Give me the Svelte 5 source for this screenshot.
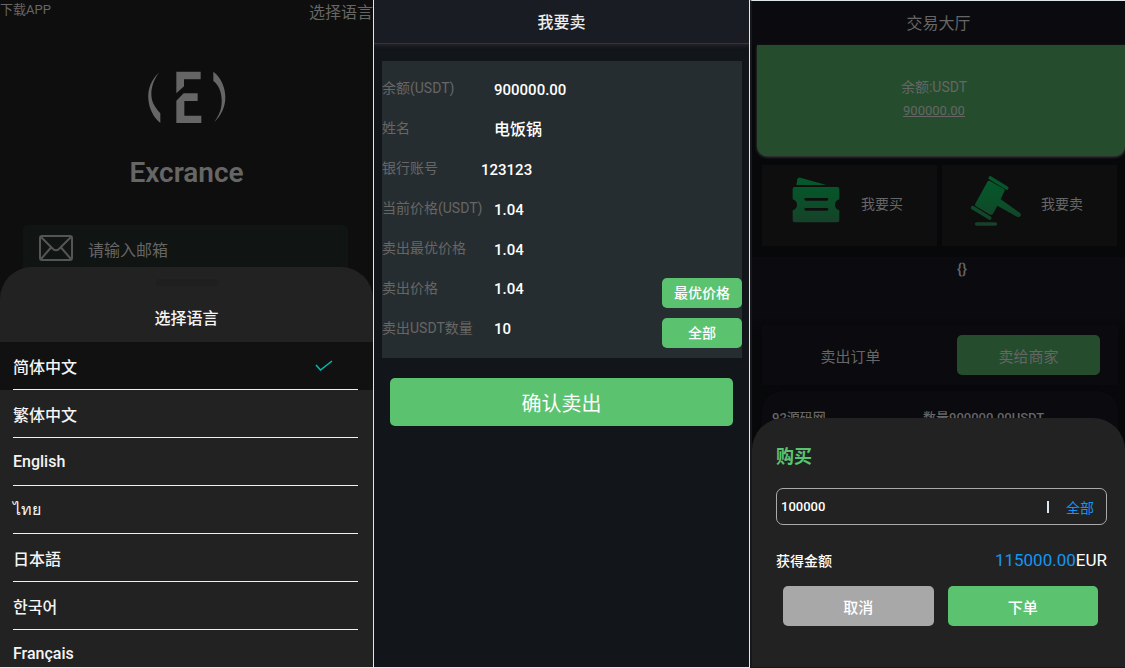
<script>
  const languages = ['简体中文', '繁体中文', 'English', 'ไทย', '日本語', '한국어', 'Français'];
  let selected = $state('简体中文');

  const facts = [
    { label: '余额(USDT)', value: '900000.00' },
    { label: '姓名', value: '电饭锅', person: true },
    { label: '银行账号', value: '123123', near: true },
    { label: '当前价格(USDT)', value: '1.04' },
    { label: '卖出最优价格', value: '1.04' }
  ];

  const fields = $state([
    { id: 'price', label: '卖出价格', value: '1.04', action: '最优价格' },
    { id: 'count', label: '卖出USDT数量', value: '10', action: '全部' }
  ]);

  let amount = $state('100000');
</script>

<main>
  <section class="screen login">
    <div class="links">
      <a class="download" href="#download">下载APP</a>
      <a class="language" href="#language">选择语言</a>
    </div>
    <svg class="logo" viewBox="440 210 246 165" aria-hidden="true">
      <path d="M480 217C454 240 445 270 447 297C449 325 462 352 483 369V340C465 320 456 305 456 282C456 258 466 235 480 217Z" />
      <path d="M531 215H604V238H554V259L531 280Z" />
      <path d="M553 280H595V303H555V347H606V369H531V302Z" />
      <path d="M642 215C665 232 678 262 678 292C678 322 665 348 645 366C662 342 668 325 667 298C666 275 658 255 642 243Z" />
    </svg>
    <h1>Excrance</h1>
    <label class="email">
      <svg viewBox="0 0 34 26" aria-hidden="true">
        <rect x="1" y="1" width="32" height="24" rx="2" />
        <path d="M2 2L14 14Q17 16.500 20 14L32 2M2 24L12 12.500M32 24L22 12.500" />
      </svg>
      <input type="email" placeholder="请输入邮箱" />
    </label>

    <div class="sheet languages">
      <div class="handle"></div>
      <h2>选择语言</h2>
      <ul>
        {#each languages as name}
          <li class:active={name === selected}>
            <button onclick={() => (selected = name)}>
              {name}
              {#if name === selected}
                <svg viewBox="0 0 18 12" aria-hidden="true"><path d="M1 5L5.500 10L17 1" /></svg>
              {/if}
            </button>
          </li>
        {/each}
      </ul>
    </div>
  </section>

  <section class="screen sell">
    <header>我要卖</header>
    <div class="form">
      {#each facts as fact}
        <div class="row">
          <span class="name" class:near={fact.near}>{fact.label}</span>
          <span class="value" class:person={fact.person}>{fact.value}</span>
        </div>
      {/each}
      {#each fields as field}
        <div class="row">
          <label class="name" for={field.id}>{field.label}</label>
          <input class="value" id={field.id} bind:value={field.value} />
          <button class="green small">{field.action}</button>
        </div>
      {/each}
    </div>
    <button class="green confirm">确认卖出</button>
  </section>

  <section class="screen hall">
    <header>交易大厅</header>
    <div class="balance">
      <span>余额:USDT</span>
      <a href="#balance">900000.00</a>
    </div>
    <nav>
      <a href="#buy">
        <svg class="ticket" viewBox="132 65 144 138" aria-hidden="true">
          <defs>
            <linearGradient id="leaf" x1="0" y1="60" x2="0" y2="210" gradientUnits="userSpaceOnUse">
              <stop offset="0" stop-color="#055a2c" />
              <stop offset="0.500" stop-color="#0a5029" />
              <stop offset="1" stop-color="#193f29" />
            </linearGradient>
          </defs>
          <path fill="url(#leaf)" d="M145 89L148 72Q150 66 157 67L235 89Z" />
          <path fill="url(#leaf)" fill-rule="evenodd" d="M140 95H268Q274 95 274 101V132A17 17 0 0 0 274 165V195Q274 201 268 201H140Q134 201 134 195V165A17 17 0 0 0 134 132V101Q134 95 140 95ZM173 128A4 4 0 0 0 173 136H237A4 4 0 0 0 237 128ZM173 158A4 4 0 0 0 173 166H237A4 4 0 0 0 237 158Z" />
        </svg>
        <span>我要买</span>
      </a>
      <a href="#sell">
        <svg class="gavel" viewBox="666 57 156 156" aria-hidden="true">
          <path fill="url(#leaf)" d="M719 76Q722 73 726 75L768 99Q772 102 769 106L758 130L816 171Q821 176 817 181Q813 185 807 182L748 149L735 173Q731 178 726 176L684 151Q679 148 682 143Z" />
          <path fill="none" stroke="url(#leaf)" stroke-width="11" stroke-linecap="round" d="M727 66L776 96M674 155L725 186M686 204H742" />
        </svg>
        <span>我要卖</span>
      </a>
    </nav>
    <div class="market">
      <p>{'{}'}</p>
      <div class="tabs">
        <button>卖出订单</button>
        <button class="current">卖给商家</button>
      </div>
      <div class="offer">
        <span>92源码网</span>
        <span>数量900000.00USDT</span>
      </div>
    </div>

    <div class="sheet buy">
      <h2>购买</h2>
      <div class="amount">
        <input aria-label="购买" bind:value={amount} />
        <i></i>
        <button>全部</button>
      </div>
      <div class="total">
        <span>获得金额</span>
        <strong><em>115000.00</em>EUR</strong>
      </div>
      <div class="actions">
        <button class="grey">取消</button>
        <button class="green">下单</button>
      </div>
    </div>
  </section>
</main>

<style>
  :global(body) {
    margin: 0;
    background: #0e0e0e;
  }
  main,
  main * {
    box-sizing: border-box;
  }
  main {
    display: grid;
    grid-template-columns: 374fr 376fr 375fr;
    min-height: 100vh;
    font-family: Roboto, 'Noto Sans CJK SC', 'Noto Sans CJK KR', sans-serif;
    font-size: 16px;
    color: #fff;
  }
  h1,
  h2,
  p,
  ul {
    margin: 0;
    padding: 0;
  }
  a {
    color: inherit;
    text-decoration: none;
  }
  button,
  input {
    font: inherit;
    color: inherit;
    border: 0;
    padding: 0;
    background: none;
    min-width: 0;
  }
  input {
    outline: 0;
  }
  .screen {
    position: relative;
    display: flex;
    flex-direction: column;
    overflow: hidden;
    min-width: 0;
  }
  .sheet {
    position: absolute;
    inset: auto 0 0;
    background: #222;
    border-radius: 32px 32px 0 0;
    overflow: hidden;
  }
  .green {
    background: #5bc370;
    border-radius: 5px;
  }

  .login {
    align-items: center;
    background: #0e0e0e;
    color: #666;
    border-right: 1px solid #e6e6e6;
    border-bottom: 1px solid #e6e6e6;
  }
  .links {
    align-self: stretch;
    display: flex;
    justify-content: space-between;
    height: 70px;
  }
  .download {
    font-size: 13px;
    line-height: 20px;
  }
  .language {
    line-height: 26px;
  }
  .logo {
    width: 82px;
    height: 55px;
    fill: #666;
  }
  h1 {
    font-size: 28px;
    font-weight: 600;
    line-height: 40px;
    margin: 28px 0 32px;
  }
  .email {
    align-self: stretch;
    display: flex;
    align-items: center;
    gap: 15px;
    height: 50px;
    margin: 0 25px 0 23px;
    padding: 0 16px;
    border-radius: 5px;
    background: #101413;
  }
  .email svg {
    width: 34px;
    height: 26px;
    margin-bottom: 4px;
    fill: none;
    stroke: #555;
    stroke-width: 2;
  }
  .email input {
    flex: 1;
  }
  .email input::placeholder {
    color: #666;
    opacity: 1;
  }
  .languages {
    height: calc(60vh - 1px);
    color: #f4f4f4;
    font-weight: 500;
  }
  .handle {
    width: 62px;
    height: 7px;
    margin: 12px auto 20px;
    border-radius: 4px;
    background: #1f1f1f;
  }
  .languages h2 {
    font-size: 16px;
    font-weight: 500;
    line-height: 26px;
    text-align: center;
    margin-bottom: 10px;
  }
  ul {
    list-style: none;
  }
  li {
    padding: 0 15px 0 13px;
  }
  li.active {
    background: #111;
  }
  li button {
    display: flex;
    align-items: center;
    justify-content: space-between;
    width: 100%;
    height: 48px;
    padding-right: 25px;
    border-bottom: 1px solid #f0f0f0;
  }
  li svg {
    width: 18px;
    height: 12px;
    fill: none;
    stroke: #00bdb0;
    stroke-width: 1.5;
  }

  .sell {
    background: #12151a;
    border-right: 1px solid #e6e6e6;
    border-bottom: 1px solid #e6e6e6;
  }
  header {
    height: 44px;
    line-height: 46px;
    text-align: center;
    font-weight: 500;
  }
  .sell header {
    background: #1a1c24;
    border-bottom: 1px solid #34343a;
    box-shadow: 0 1px 4px #2b2c31;
    color: #eee;
  }
  .form {
    margin: 17px 7px 20px 8px;
    padding: 7px 0 10px;
    background: #262d30;
  }
  .row {
    display: flex;
    align-items: flex-end;
    height: 40px;
    line-height: 40px;
  }
  .name {
    flex: none;
    width: 112px;
    font-size: 14px;
    color: #666;
  }
  .near {
    width: 99px;
  }
  .value {
    flex: 1;
    height: 40px;
    padding-top: 2px;
    font-size: 15px;
    font-weight: 500;
  }
  .person {
    font-size: 16px;
  }
  .small {
    width: 80px;
    height: 30px;
    line-height: 30px;
    font-size: 14px;
    font-weight: 500;
  }
  .confirm {
    height: 48px;
    margin: 0 16px;
    font-size: 20px;
  }

  .hall {
    background: #07080a;
    color: #666;
    border-top: 1px solid #dfe5e6;
    border-left: 2px solid #18181c;
    border-bottom: 1px solid #18181c;
  }
  .hall header {
    background: #0a0a0f;
    font-weight: 400;
  }
  .balance {
    display: flex;
    flex-direction: column;
    align-items: center;
    height: 111px;
    margin-left: 5px;
    padding: 30px 14px 0 0;
    line-height: 24px;
    font-size: 14px;
    background: #254d2d;
    border-radius: 0 0 10px 10px;
    box-shadow: 0 1px 3px #444;
  }
  .balance a {
    font-size: 13px;
    text-decoration: underline;
  }
  nav {
    display: flex;
    gap: 5px;
    padding: 9px 8px 11px 10px;
  }
  nav a {
    flex: 1;
    display: flex;
    align-items: flex-start;
    height: 81px;
    padding: 10px 0 0 28px;
    font-size: 14px;
    line-height: 58px;
    background: #0e0e0e;
  }
  .ticket {
    width: 48px;
    height: 46px;
    margin: 2px 21px 0 2px;
  }
  .gavel {
    width: 52px;
    height: 52px;
    margin-right: 19px;
  }
  .market {
    flex: 1;
    padding: 0 7px 0 10px;
    background: linear-gradient(#0a0a0f 60px, #07080a 76px);
  }
  .market p {
    height: 68px;
    padding-left: 44px;
    line-height: 24px;
    text-align: center;
    font-size: 15px;
    font-weight: 500;
  }
  .tabs {
    display: flex;
    gap: 18px;
    margin-bottom: 6px;
    padding: 10px 18px 10px 0;
    background: #0a0a0f;
  }
  .tabs button {
    flex: 1;
    height: 40px;
    font-size: 15px;
    border-radius: 5px;
  }
  .tabs .current {
    background: #254d2d;
    flex: 0 1 143px;
  }
  .offer {
    display: grid;
    grid-template-columns: 151px 1fr;
    height: 80px;
    padding: 17px 10px;
    font-size: 13px;
    line-height: 20px;
    font-weight: 500;
    background: #0a0a0f;
    border-radius: 20px;
  }
  .buy {
    padding: 24px 18px 41px 24px;
    color: #fff;
  }
  .buy h2 {
    font-size: 18px;
    font-weight: 700;
    line-height: 30px;
    color: #5bc370;
  }
  .amount {
    display: flex;
    align-items: center;
    height: 37px;
    margin: 16px 0 20px;
    padding: 0 12px 0 4px;
    border: 1px solid #aaa;
    border-radius: 7px;
    font-size: 14px;
  }
  .amount input {
    flex: 1;
    font-size: 13px;
    font-weight: 500;
  }
  .amount i {
    width: 2px;
    height: 12px;
    background: #dce7f0;
    margin-right: 17px;
  }
  .amount button,
  em {
    color: #1296f3;
  }
  .total {
    display: flex;
    align-items: center;
    justify-content: space-between;
    height: 30px;
    margin-bottom: 2px;
    font-size: 14px;
    font-weight: 500;
  }
  strong {
    font-size: 17px;
    font-weight: 400;
  }
  em {
    font-style: normal;
  }
  .actions {
    display: flex;
    gap: 14px;
    padding: 9px 9px 0 7px;
  }
  .actions button {
    flex: 1;
    height: 40px;
    font-size: 15px;
    font-weight: 500;
  }
  .grey {
    background: #a8a8a8;
    border-radius: 5px;
  }
</style>
